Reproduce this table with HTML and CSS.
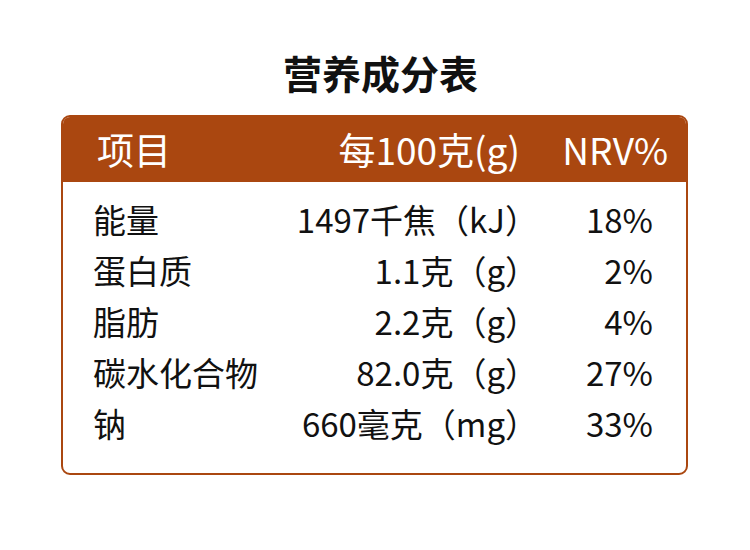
FILE: index.html
```html
<!DOCTYPE html>
<html lang="zh-CN">
<head>
<meta charset="utf-8">
<title>营养成分表</title>
<link rel="stylesheet" href="styles.css">
</head>
<body>
<div class="page">
  <h1 class="title">营养成分表</h1>
  <div class="table">
    <div class="row head">
      <span class="name">项目</span>
      <span class="val">每100克(g)</span>
      <span class="nrv">NRV%</span>
    </div>
    <div class="body">
      <div class="row">
        <span class="name">能量</span>
        <span class="val">1497千焦（kJ）</span>
        <span class="nrv">18%</span>
      </div>
      <div class="row">
        <span class="name">蛋白质</span>
        <span class="val">1.1克（g）</span>
        <span class="nrv">2%</span>
      </div>
      <div class="row">
        <span class="name">脂肪</span>
        <span class="val">2.2克（g）</span>
        <span class="nrv">4%</span>
      </div>
      <div class="row">
        <span class="name">碳水化合物</span>
        <span class="val">82.0克（g）</span>
        <span class="nrv">27%</span>
      </div>
      <div class="row">
        <span class="name">钠</span>
        <span class="val">660毫克（mg）</span>
        <span class="nrv">33%</span>
      </div>
    </div>
  </div>
</div>
</body>
</html>
```
FILE: styles.css
```css
html, body {
  margin: 0;
  padding: 0;
  background: #ffffff;
}
body {
  font-family: "Noto Sans CJK SC", "Noto Sans", sans-serif;
  color: #111111;
  width: 750px;
  height: 550px;
  overflow: hidden;
}
.page {
  padding-top: 46px;
  padding-left: 61px;
}
.title {
  margin: 0;
  width: 627px;
  padding-left: 12px;
  box-sizing: border-box;
  text-align: center;
  font-size: 39px;
  line-height: 52px;
  font-weight: 700;
  color: #111111;
  height: 69px;
}
.table {
  width: 627px;
  border: 2px solid #aa4710;
  border-radius: 9px;
  overflow: hidden;
  box-sizing: border-box;
}
.row {
  display: grid;
  grid-template-columns: 1fr auto 115px;
  align-items: center;
}
.row .val, .row .nrv {
  text-align: right;
}
.head {
  background: #aa4710;
  color: #ffffff;
  height: 65px;
  padding: 0 18px 0 34px;
  grid-template-columns: 1fr auto 148px;
  font-size: 37px;
  line-height: 65px;
}
.body {
  padding: 12px 33px 24px 30px;
}
.body .row {
  font-size: 33px;
  line-height: 51px;
  height: 51px;
}
```
